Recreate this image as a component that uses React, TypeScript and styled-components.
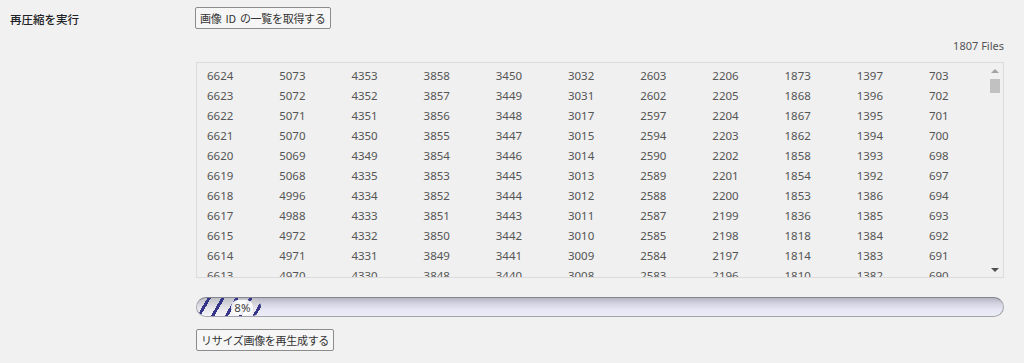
import styled, { createGlobalStyle } from "styled-components";

const GlobalStyle = createGlobalStyle`
  html, body {
    margin: 0;
    padding: 0;
    background: #f1f1f1;
  }
  body {
    font-family: "Noto Sans", "Noto Sans CJK JP", sans-serif;
    color: #3c434a;
  }
`;

const FormRow = styled.div`
  display: grid;
  grid-template-columns: 196px minmax(0, 1fr);
  padding-right: 20px;
`;

const RowLabel = styled.div`
  padding: 11px 0 0 10px;
  font-family: "Noto Sans CJK JP", sans-serif;
  font-size: 11.5px;
  line-height: 16px;
  font-weight: 500;
  color: #1d2327;
`;

const RowBody = styled.div`
  display: flex;
  flex-direction: column;
  min-width: 0;
  padding-top: 7px;
`;

const Button = styled.button<{ $shift?: number }>`
  align-self: flex-start;
  height: 22px;
  padding: 0 4px;
  margin-left: ${({ $shift }) => $shift ?? 0}px;
  font-family: "Noto Sans CJK JP", sans-serif;
  font-size: 11px;
  letter-spacing: -0.3px;
  word-spacing: 2px;
  color: #333;
  background: #f6f6f6;
  border: 1px solid #8c8c8c;
  border-radius: 2px;
  cursor: pointer;
`;

const FileCount = styled.div`
  margin-top: 9px;
  text-align: right;
  font-size: 11px;
  line-height: 16px;
  color: #555;
`;

const ListBox = styled.div`
  display: flex;
  margin-top: 8px;
  height: 214px;
  border: 1px solid #dcdcdc;
  background: #f0f0f0;
  overflow: hidden;
`;

const IdGrid = styled.div`
  flex: 1;
  min-width: 0;
  display: grid;
  grid-template-columns: repeat(11, 72.2px);
  grid-auto-rows: 20px;
  padding: 3px 0 0 10px;
  overflow: hidden;
`;

const IdCell = styled.div`
  font-size: 11.5px;
  line-height: 20px;
  color: #555;
  white-space: nowrap;
`;

const ScrollBar = styled.div`
  flex: none;
  width: 16px;
  display: flex;
  flex-direction: column;
  align-items: center;
`;

const ScrollArrow = styled.div<{ $down?: boolean }>`
  height: 15px;
  width: 100%;
  display: flex;
  align-items: center;
  justify-content: center;
  &::after {
    content: "";
    width: 0;
    height: 0;
    border-left: 4px solid transparent;
    border-right: 4px solid transparent;
    ${({ $down }) =>
      $down
        ? "border-top: 4px solid #505050;"
        : "border-bottom: 4px solid #a3a3a3;"}
  }
`;

const ScrollTrack = styled.div`
  flex: 1;
  width: 100%;
  display: flex;
  justify-content: center;
  padding-top: 1px;
`;

const ScrollThumb = styled.div`
  width: 10px;
  height: 14px;
  background: #c1c1c1;
`;

const Progress = styled.div`
  margin-top: 19px;
  height: 18px;
  border: 1px solid #a4a4ac;
  border-top-color: #85858d;
  border-radius: 10px;
  background: linear-gradient(#b5b5c3 0%, #d6d6e4 35%, #e8e8f6 70%, #ececf4 100%);
  overflow: hidden;
`;

const ProgressFill = styled.div`
  height: 100%;
  border-radius: 10px;
  display: flex;
  align-items: center;
  justify-content: flex-end;
  padding-right: 8px;
  box-sizing: border-box;
  background:
    repeating-linear-gradient(
      120deg,
      transparent 0px,
      transparent 9px,
      #35358a 9px,
      #35358a 12px
    ),
    linear-gradient(#bfbfc6 0%, #e4e4ea 55%, #f4f4f8 100%);
`;

const ProgressLabel = styled.span`
  font-size: 11.5px;
  line-height: 15px;
  padding: 0 3px;
  color: #444;
  background: rgba(255, 255, 255, 0.9);
  border-radius: 7px;
`;

const FooterButton = styled(Button)`
  margin-top: 12px;
`;

const columns: number[][] = [
  [6624, 6623, 6622, 6621, 6620, 6619, 6618, 6617, 6615, 6614, 6613],
  [5073, 5072, 5071, 5070, 5069, 5068, 4996, 4988, 4972, 4971, 4970],
  [4353, 4352, 4351, 4350, 4349, 4335, 4334, 4333, 4332, 4331, 4330],
  [3858, 3857, 3856, 3855, 3854, 3853, 3852, 3851, 3850, 3849, 3848],
  [3450, 3449, 3448, 3447, 3446, 3445, 3444, 3443, 3442, 3441, 3440],
  [3032, 3031, 3017, 3015, 3014, 3013, 3012, 3011, 3010, 3009, 3008],
  [2603, 2602, 2597, 2594, 2590, 2589, 2588, 2587, 2585, 2584, 2583],
  [2206, 2205, 2204, 2203, 2202, 2201, 2200, 2199, 2198, 2197, 2196],
  [1873, 1868, 1867, 1862, 1858, 1854, 1853, 1836, 1818, 1814, 1810],
  [1397, 1396, 1395, 1394, 1393, 1392, 1386, 1385, 1384, 1383, 1382],
  [703, 702, 701, 700, 698, 697, 694, 693, 692, 691, 690],
];

// rows in reading order, the list fills column by column
const rows = columns[0].map((_, r) => columns.map((col) => col[r]));

export default function App() {
  const percent = 8;

  return (
    <>
      <GlobalStyle />
      <FormRow>
        <RowLabel>再圧縮を実行</RowLabel>
        <RowBody>
          <Button type="button" $shift={-1}>
            画像 ID の一覧を取得する
          </Button>
          <FileCount>1807 Files</FileCount>
          <ListBox>
            <IdGrid>
              {rows.map((row, r) =>
                row.map((id, c) => <IdCell key={`${r}-${c}`}>{id}</IdCell>)
              )}
            </IdGrid>
            <ScrollBar>
              <ScrollArrow />
              <ScrollTrack>
                <ScrollThumb />
              </ScrollTrack>
              <ScrollArrow $down />
            </ScrollBar>
          </ListBox>
          <Progress>
            <ProgressFill style={{ width: `${percent}%` }}>
              <ProgressLabel>{percent}%</ProgressLabel>
            </ProgressFill>
          </Progress>
          <FooterButton type="button">リサイズ画像を再生成する</FooterButton>
        </RowBody>
      </FormRow>
    </>
  );
}
